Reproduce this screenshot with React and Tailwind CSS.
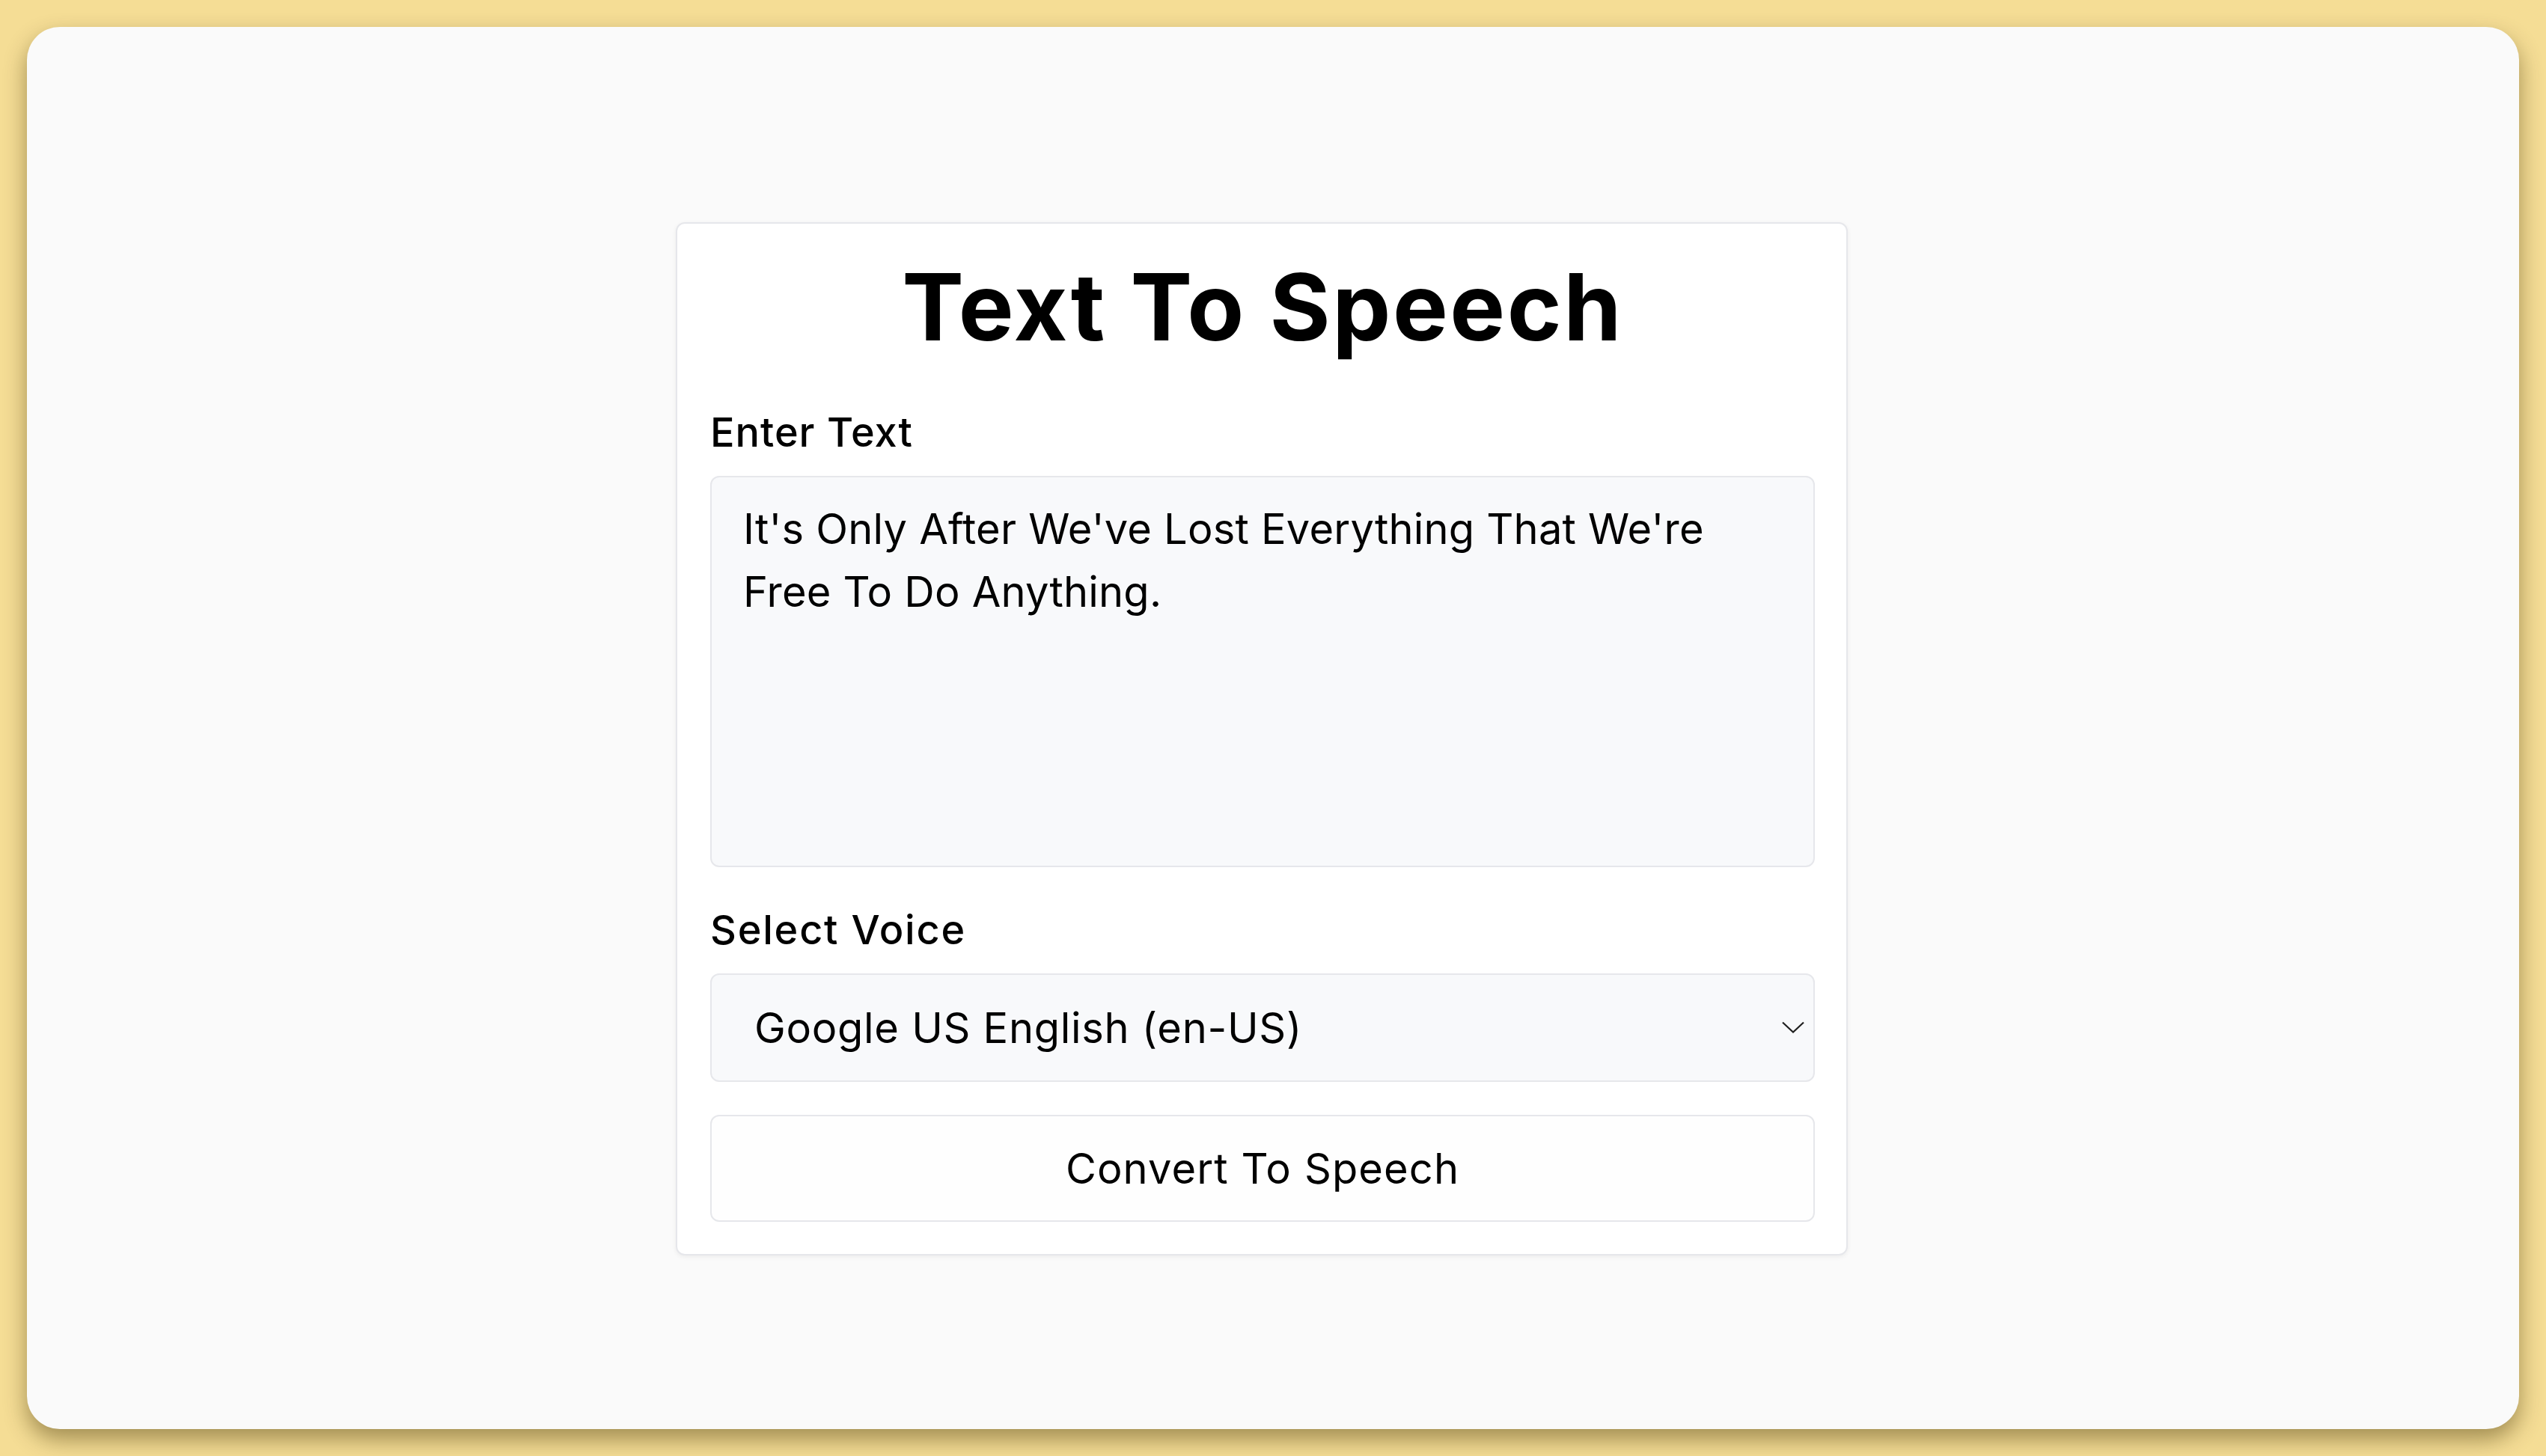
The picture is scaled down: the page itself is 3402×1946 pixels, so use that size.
import React, { useState } from 'react';

const voices = ['Google US English (en-US)', 'Google UK English Female (en-GB)', 'Google UK English Male (en-GB)'];

function App() {
  const [text, setText] = useState("It's Only After We've Lost Everything That We're Free To Do Anything.");
  const [voice, setVoice] = useState(voices[0]);

  const speak = () => {
    if (!text.trim() || typeof window === 'undefined' || !window.speechSynthesis) return;
    const u = new SpeechSynthesisUtterance(text);
    window.speechSynthesis.speak(u);
  };

  return (
    <div className="w-full h-[1946px] p-[36px] bg-[#f5dd95] font-['Inter',sans-serif] text-black">
      <div className="h-full rounded-[44px] bg-[#fafafa] shadow-[0_14px_30px_rgba(60,45,0,0.45)] flex justify-center pr-[30px]">
        {/* Card */}
        <div className="mt-[261px] self-start w-[1566px] bg-white border-2 border-[#e6e7eb] rounded-[12px] shadow-[0_2px_6px_rgba(0,0,0,0.06)] pl-[44px] pr-[42px] pt-[49px] pb-[43px] flex flex-col">
          <h1 className="text-center text-[124px] leading-none font-bold tracking-[2.5px]">Text To Speech</h1>

          <label className="mt-[79px] text-[54px] leading-none font-medium tracking-[1px]">Enter Text</label>
          <textarea
            value={text}
            onChange={(e) => setText(e.target.value)}
            className="mt-[31px] h-[523px] w-full resize-none rounded-[12px] border-2 border-[#e6e7eb] bg-[#f8f9fb] px-[42px] pt-[27px] text-[56px] leading-[84px] tracking-[0.2px] outline-none"
          />

          <label className="mt-[57px] text-[54px] leading-none font-medium tracking-[1.8px]">Select Voice</label>
          <div className="relative mt-[31px]">
            <select
              value={voice}
              onChange={(e) => setVoice(e.target.value)}
              className="h-[145px] w-full appearance-none rounded-[12px] border-2 border-[#e6e7eb] bg-[#f8f9fb] pl-[57px] pr-[80px] text-[56px] tracking-[0.7px] outline-none"
            >
              {voices.map((v) => (
                <option key={v} value={v}>{v}</option>
              ))}
            </select>
            <svg className="pointer-events-none absolute right-[14px] top-[64px]" width="30" height="16" viewBox="0 0 30 16" fill="none">
              <path d="M1 1.5 L15 14.5 L29 1.5" stroke="#1f1f1f" strokeWidth="2.2" />
            </svg>
          </div>

          <button
            onClick={speak}
            className="mt-[44px] h-[143px] w-full rounded-[12px] border-2 border-[#e6e7eb] bg-[#fefefe] text-[56px] tracking-[1.1px]"
          >
            Convert To Speech
          </button>
        </div>
      </div>
    </div>
  );
}

export default App;
